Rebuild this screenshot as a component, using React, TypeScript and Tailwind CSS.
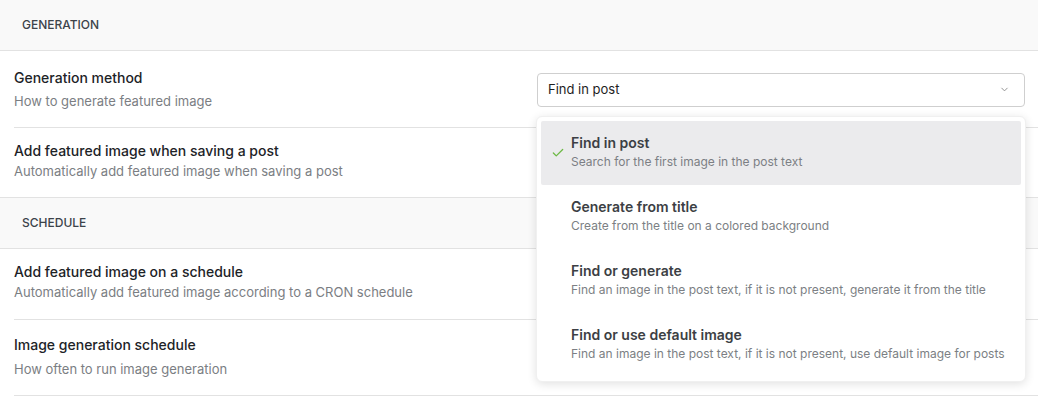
import { Check, ChevronDown } from 'lucide-react';

type Option = {
  label: string;
  hint: string;
};

const options: Option[] = [
  { label: 'Find in post', hint: 'Search for the first image in the post text' },
  { label: 'Generate from title', hint: 'Create from the title on a colored background' },
  {
    label: 'Find or generate',
    hint: 'Find an image in the post text, if it is not present, generate it from the title',
  },
  {
    label: 'Find or use default image',
    hint: 'Find an image in the post text, if it is not present, use default image for posts',
  },
];

const SectionHeader = ({ title, className }: { title: string; className?: string }) => (
  <div
    className={`flex items-center px-[22px] bg-[#f9f9f9] border-b border-[#e2e2e2] text-[12px] font-medium uppercase text-[#3c434a] ${className ?? ''}`}
  >
    {title}
  </div>
);

const Toggle = () => (
  <div className="w-[36px] h-[18px] rounded-full border border-[#1e1e1e] p-[2px] flex items-center">
    <span className="w-[12px] h-[12px] rounded-full bg-[#1e1e1e]" />
  </div>
);

const Select = ({ value, open }: { value?: string; open?: boolean }) => (
  <div className="relative w-[488px]">
    <div className="flex items-center justify-between h-[34px] pl-[10px] pr-[14px] border border-[#cfcfcf] rounded-[4px] bg-white text-[13px] text-[#1e1e1e]">
      <span>{value}</span>
      <ChevronDown size={11} strokeWidth={2} className="text-[#8a8a8a]" />
    </div>
    {open && (
      <div className="absolute z-10 left-[-1px] top-[43px] w-[490px] p-[4px] bg-white rounded-[6px] border border-[#f0f0f0] shadow-[0_2px_10px_rgba(0,0,0,0.12)]">
        {options.map((o, i) => (
          <div
            key={o.label}
            className={`flex h-[64px] rounded-[2px] ${i === 0 ? 'bg-[#ebebed]' : ''}`}
          >
            <div className="w-[30px] flex items-center justify-center pl-[4px]">
              {i === 0 && <Check size={14} strokeWidth={2.2} className="text-[#6cb944]" />}
            </div>
            <div className="flex flex-col pt-[12px]">
              <p className="text-[14px] leading-5 font-semibold text-[#3c3f44]">{o.label}</p>
              <p className="text-[12px] leading-4 mt-[1px] text-[#7c7f84]">{o.hint}</p>
            </div>
          </div>
        ))}
      </div>
    )}
  </div>
);

type RowProps = {
  title: string;
  hint: string;
  control: React.ReactNode;
  className?: string;
  hintClassName?: string;
};

const Row = ({ title, hint, control, className, hintClassName }: RowProps) => (
  <div
    className={`ml-[14px] pr-[13px] flex items-center justify-between border-b border-[#e2e2e2] ${className ?? ''}`}
  >
    <div className="flex flex-col">
      <p className="text-[14px] leading-5 font-medium text-[#1d2327]">{title}</p>
      <p className={`text-[13px] leading-5 text-[#7b7e83] ${hintClassName ?? ''}`}>{hint}</p>
    </div>
    {control}
  </div>
);

export default function App() {
  return (
    <div
      className="w-[1038px] h-[398px] bg-white overflow-hidden"
      style={{ fontFamily: 'Inter, "Noto Sans", sans-serif' }}
    >
      <SectionHeader title="Generation" className="h-[51px]" />
      <Row
        title="Generation method"
        hint="How to generate featured image"
        hintClassName="mt-[3px]"
        className="pt-[17px] pb-[16px] relative z-10"
        control={<Select value="Find in post" open />}
      />
      <Row
        title="Add featured image when saving a post"
        hint="Automatically add featured image when saving a post"
        className="pt-[13px] pb-[16px] border-b-0"
        control={<Toggle />}
      />
      <SectionHeader title="Schedule" className="h-[52px] border-t" />
      <Row
        title="Add featured image on a schedule"
        hint="Automatically add featured image according to a CRON schedule"
        className="pt-[13px] pb-[17px]"
        control={<Toggle />}
      />
      <Row
        title="Image generation schedule"
        hint="How often to run image generation"
        hintClassName="mt-[4px]"
        className="pt-[15px] pb-[16px]"
        control={<Select />}
      />
    </div>
  );
}
